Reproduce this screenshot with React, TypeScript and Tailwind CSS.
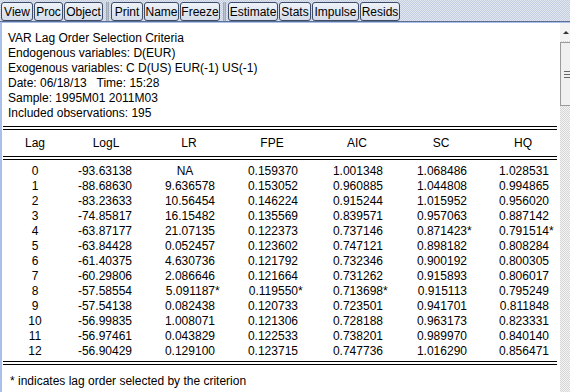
const buttons = [
  { label: "View", cls: "w-[32px]" },
  { label: "Proc", cls: "w-[29px]" },
  { label: "Object", cls: "w-[39px]" },
  { sep: true },
  { label: "Print", cls: "w-[32px]" },
  { label: "Name", cls: "w-[35px]" },
  { label: "Freeze", cls: "w-[40px]" },
  { sep: true },
  { label: "Estimate", cls: "w-[50px]" },
  { label: "Stats", cls: "w-[32px]" },
  { label: "Impulse", cls: "w-[47px]" },
  { label: "Resids", cls: "w-[40px]" },
];

const info = [
  "VAR Lag Order Selection Criteria",
  "Endogenous variables: D(EUR)",
  "Exogenous variables: C D(US) EUR(-1) US(-1)",
  "Date: 06/18/13   Time: 15:28",
  "Sample: 1995M01 2011M03",
  "Included observations: 195",
];

const heads = ["LogL", "LR", "FPE", "AIC", "SC", "HQ"];

const rows = [
  ["0", "-93.63138", "NA", "0.159370", "1.001348", "1.068486", "1.028531"],
  ["1", "-88.68630", "9.636578", "0.153052", "0.960885", "1.044808", "0.994865"],
  ["2", "-83.23633", "10.56454", "0.146224", "0.915244", "1.015952", "0.956020"],
  ["3", "-74.85817", "16.15482", "0.135569", "0.839571", "0.957063", "0.887142"],
  ["4", "-63.87177", "21.07135", "0.122373", "0.737146", "0.871423*", "0.791514*"],
  ["5", "-63.84428", "0.052457", "0.123602", "0.747121", "0.898182", "0.808284"],
  ["6", "-61.40375", "4.630736", "0.121792", "0.732346", "0.900192", "0.800305"],
  ["7", "-60.29806", "2.086646", "0.121664", "0.731262", "0.915893", "0.806017"],
  ["8", "-57.58554", "5.091187*", "0.119550*", "0.713698*", "0.915113", "0.795249"],
  ["9", "-57.54138", "0.082438", "0.120733", "0.723501", "0.941701", "0.811848"],
  ["10", "-56.99835", "1.008071", "0.121306", "0.728188", "0.963173", "0.823331"],
  ["11", "-56.97461", "0.043829", "0.122533", "0.738201", "0.989970", "0.840140"],
  ["12", "-56.90429", "0.129100", "0.123715", "0.747736", "1.016290", "0.856471"],
];

const gridCols = "grid grid-cols-[64px_73px_83px_83px_85px_84px_82px]";

function Cell({ v }: { v: string }) {
  if (v === "NA") {
    return (
      <div className="flex justify-end pr-[8px]">
        <span className="w-[60px] text-center">NA</span>
      </div>
    );
  }
  const star = v.endsWith("*");
  const num = star ? v.slice(0, -1) : v;
  return (
    <div className="flex justify-end pr-[8px]">
      <span>{num}</span>
      <span className="w-0 overflow-visible whitespace-nowrap">{star ? "*" : ""}</span>
    </div>
  );
}

function DoubleRule() {
  return <div className="h-[4px] border-t border-b border-black" />;
}

export default function App() {
  return (
    <div className="w-[570px] h-[392px] overflow-hidden bg-white text-[12px] text-black font-['Liberation_Sans',Arial,sans-serif]">
      <div className="h-[22px] flex items-start pt-[2px] pl-[1px] border-b border-[#5d6f94] bg-[#d3dae7] bg-[image:repeating-conic-gradient(#c6cfdf_0_25%,#e0e6f0_0_50%)] bg-[length:2px_2px]">
        {buttons.map((b, i) =>
          b.sep ? (
            <div key={i} className="w-[7px] h-[19px] flex justify-center">
              <div className="w-[3px] h-[19px] bg-[#b9c0cc] border-x border-[#a2aab8]" />
            </div>
          ) : (
            <div
              key={i}
              className={`${b.cls} h-[19px] mr-[1px] flex items-center justify-center rounded-[3px] border border-[#3d4b68] bg-gradient-to-b from-[#eef2f8] to-[#d5dde9] leading-none`}
            >
              {b.label}
            </div>
          )
        )}
      </div>
      <div className="flex h-[370px] border-t border-[#a8c0ea]">
        <div className="w-[2px] bg-[#a8c0ea]" />
        <div className="flex-1 ml-[1px] mr-[3px]">
          <div className="pt-[8px] pl-[5px] leading-[15px]">
            {info.map((t) => (
              <div key={t} className="whitespace-pre">{t}</div>
            ))}
          </div>
          <div className="mt-[5px]">
            <DoubleRule />
            <div className={`${gridCols} h-[26px] items-center`}>
              <div className="text-center">Lag</div>
              {heads.map((h) => (
                <div key={h} className="flex justify-end pr-[8px]">
                  <span className="w-[52px] text-center">{h}</span>
                </div>
              ))}
            </div>
            <DoubleRule />
            <div className="pt-[4px] leading-[15px]">
              {rows.map((r) => (
                <div key={r[0]} className={gridCols}>
                  <div className="text-center">{r[0]}</div>
                  {r.slice(1).map((v, j) => (
                    <Cell key={j} v={v} />
                  ))}
                </div>
              ))}
            </div>
            <div className="mt-[2px]">
              <DoubleRule />
            </div>
            <div className="pt-[9px] pl-[7px] leading-[15px]">* indicates lag order selected by the criterion</div>
          </div>
        </div>
        <div className="w-[10px] flex flex-col bg-[#e6e6e6] bg-[image:repeating-conic-gradient(#d6d6d6_0_25%,#f4f4f4_0_50%)] bg-[length:2px_2px]">
          <div className="h-[18px] bg-[#f3f3f3] flex items-center justify-end pr-[1px]">
            <div className="w-0 h-0 border-x-[3px] border-x-transparent border-b-[3px] border-b-[#333]" />
          </div>
          <div className="mt-[1px] h-[64px] border-l border-t border-b border-[#9a9a9a] bg-[#f0f0f0] flex flex-col justify-center items-end gap-[2px] pl-[2px]">
            <div className="w-[6px] h-px bg-[#666]" />
            <div className="w-[6px] h-px bg-[#666]" />
            <div className="w-[6px] h-px bg-[#666]" />
          </div>
        </div>
      </div>
    </div>
  );
}
